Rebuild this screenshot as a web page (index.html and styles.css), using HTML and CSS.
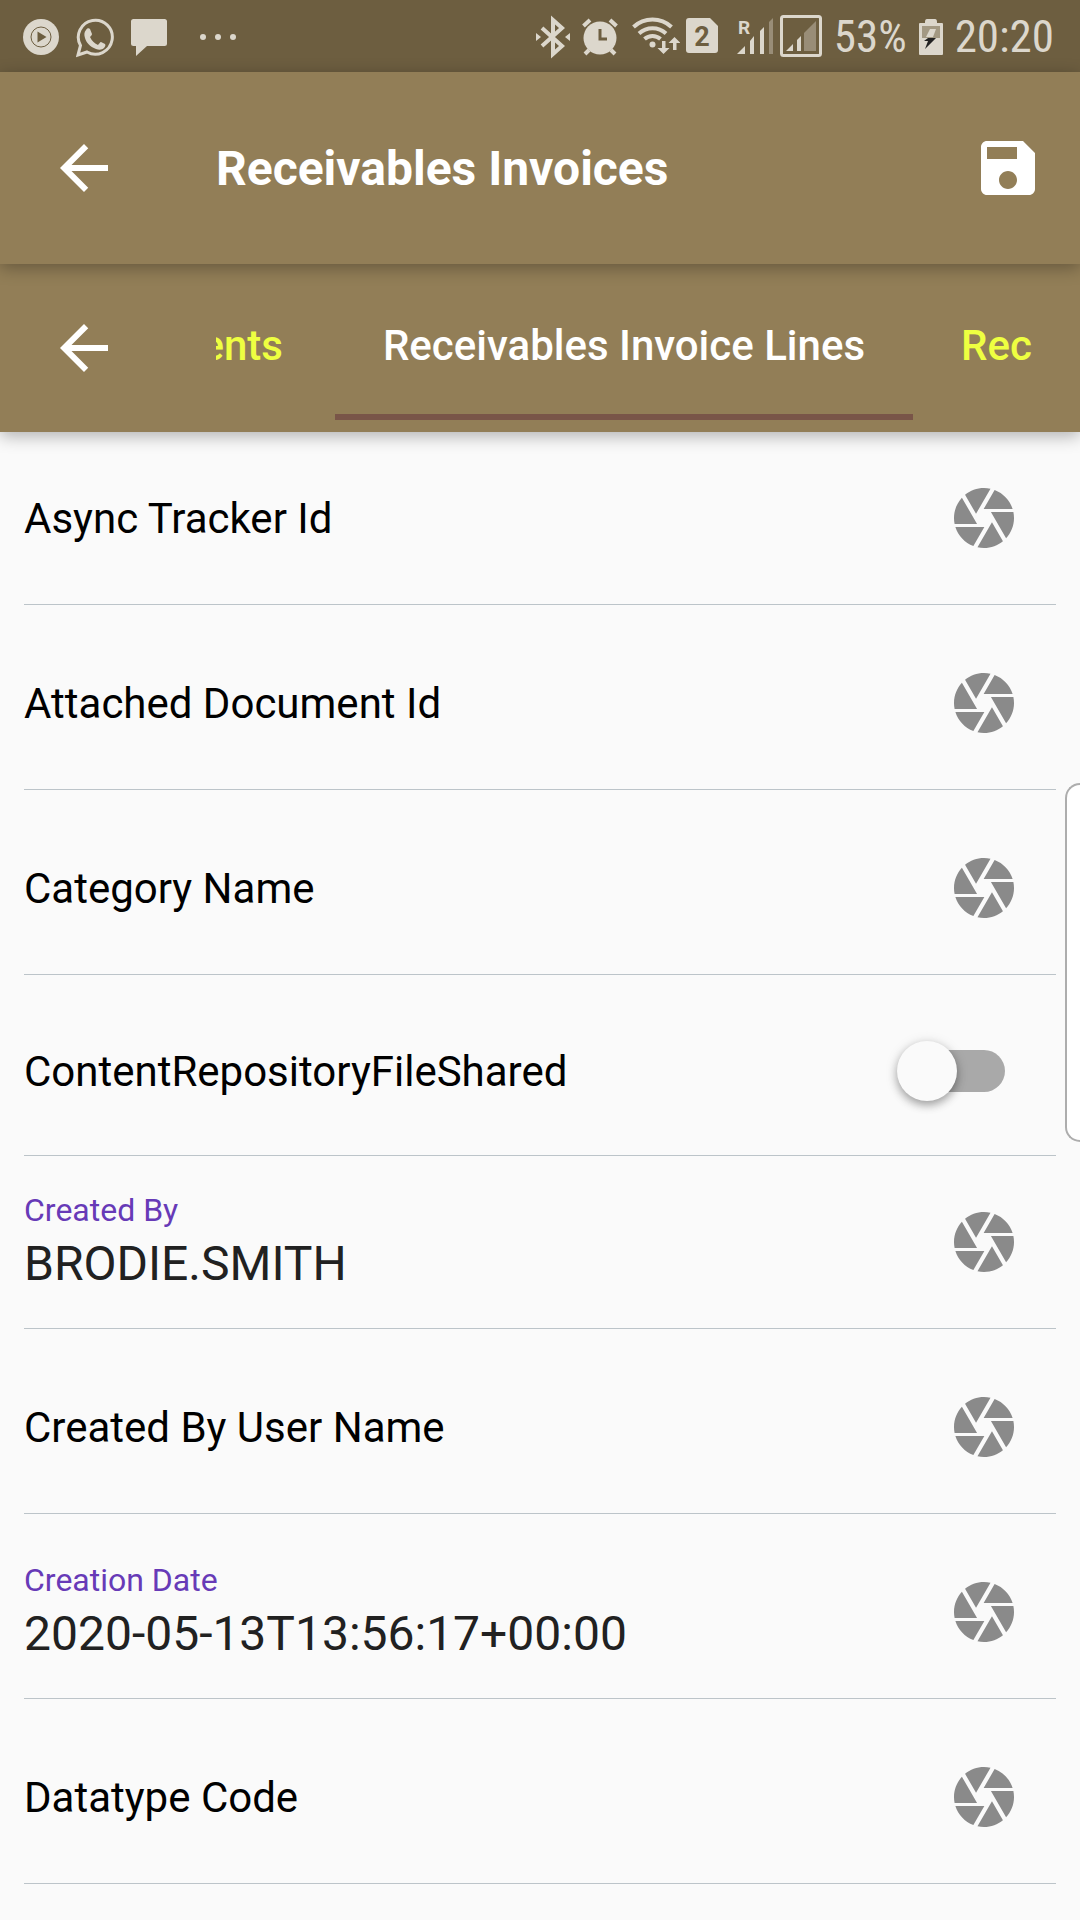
FILE: index.html
```
<!DOCTYPE html>
<html lang="en">
<head>
<meta charset="utf-8">
<meta name="viewport" content="width=device-width, initial-scale=1">
<title>Receivables Invoices</title>
<link rel="stylesheet" href="styles.css">
</head>
<body>
<svg class="defs" width="0" height="0" aria-hidden="true">
  <symbol id="back" viewBox="0 0 24 24"><path d="M20 11H7.83l5.59-5.59L12 4l-8 8 8 8 1.41-1.41L7.83 13H20v-2z"/></symbol>
  <symbol id="save" viewBox="0 0 24 24"><path d="M17 3H5c-1.11 0-2 .9-2 2v14c0 1.1.89 2 2 2h14c1.1 0 2-.9 2-2V7l-4-4zm-5 16c-1.66 0-3-1.34-3-3s1.34-3 3-3 3 1.34 3 3-1.34 3-3 3zm3-10H5V5h10v4z"/></symbol>
  <symbol id="camera" viewBox="0 0 24 24"><path d="M9.4 10.5l4.77-8.26C13.47 2.09 12.75 2 12 2c-2.4 0-4.6.85-6.32 2.25l3.66 6.35.06-.1zM21.54 9c-.92-2.92-3.15-5.26-6-6.34L11.88 9h9.66zm.26 1h-7.49l.29.5 4.76 8.25C21 16.97 22 14.61 22 12c0-.69-.07-1.35-.2-2zM8.54 12l-3.9-6.75C3.01 7.03 2 9.39 2 12c0 .69.07 1.35.2 2h7.49l-1.15-2zm-6.08 3c.92 2.92 3.15 5.26 6 6.34L12.12 15H2.46zm11.27 0l-3.9 6.76c.7.15 1.42.24 2.17.24 2.4 0 4.6-.85 6.32-2.25l-3.66-6.35-.93 1.6z"/></symbol>
</svg>

<div class="status">
  <div class="status-icons status-left">
    <svg width="36" height="48" viewBox="23 12 36 48"><circle cx="41" cy="37" r="18"/><circle class="cut-line" cx="41" cy="37" r="10"/><path class="cut" d="M37.500 31.500v11l9-5.500z"/></svg>
    <svg width="38" height="48" viewBox="76 12 38 48"><path class="line3" d="M78 55l2.500-9.500A17 17 0 1 1 87 52z"/><path d="M86 30c1-2 3-2 4-1l2 5c0 1-1 2-2 3 2 4 4 6 8 8 1-1 2-3 3-3l4 2c1 1 0 3-1 4-2 2-5 2-8 1-6-2-10-7-11-11-1-3-1-6 1-8z"/></svg>
    <svg width="36" height="48" viewBox="131 12 36 48"><path d="M133.500 19h31a2.500 2.500 0 0 1 2.500 2.500v22a2.500 2.500 0 0 1-2.500 2.500H147l-11 10V46h-2.500a2.500 2.500 0 0 1-2.500-2.500v-22a2.500 2.500 0 0 1 2.500-2.500z"/></svg>
    <svg class="more" width="36" height="48" viewBox="200 12 36 48"><circle cx="203" cy="37" r="3"/><circle cx="218" cy="37" r="3"/><circle cx="233" cy="37" r="3"/></svg>
  </div>
  <div class="status-icons status-right">
    <svg width="34" height="48" viewBox="539 12 34 48"><path class="line4" d="M545 28l20 18-9 8V20l9 8-20 18"/><path d="M539 33v8l5-4zM573 33v8l-5-4z"/></svg>
    <svg width="36" height="48" viewBox="584 12 36 48"><circle cx="602" cy="38" r="16.500"/><path class="line4" d="M585.500 26l6.500-6M618.500 26l-6.500-6M591 50l-4 4M613 50l4 4"/><path class="cut-line3" d="M602 29v10h7"/></svg>
    <svg class="wifi" width="48" height="48" viewBox="634 12 48 48"><path class="line4" d="M635.500 27a28 28 0 0 1 38 0M641 33.500a20 20 0 0 1 27 0M646.500 39a12 12 0 0 1 16 0"/><circle cx="654.500" cy="44.500" r="3"/><path d="M664 41h3.500v7h4l-6 6-6-6h4.500zM675 50h3.500v-7h4l-6-6-6 6H675z"/></svg>
    <svg class="sim" width="32" height="48" viewBox="688 12 32 48"><path d="M691 18h21l8 8v24a3 3 0 0 1-3 3h-26a3 3 0 0 1-3-3V21a3 3 0 0 1 3-3z"/><text x="704" y="46">2</text></svg>
    <svg class="signal" width="36" height="48" viewBox="739 12 36 48"><path d="M739 54l8-8v8zM752 54V41l4-5v18zM762 54V31l4-4v27z"/><path class="dim" d="M771 54V22l4-4v36z"/><text x="740" y="34">R</text></svg>
    <svg class="boxed" width="42" height="48" viewBox="782 12 42 48"><rect class="line3" x="783.500" y="16.500" width="39" height="39" rx="2"/><path d="M788 51l7-7v7zM799 51V40l4-4v15z"/><path class="dim" d="M806 51V33l12-12v30z"/></svg>
    <span class="percent">53%</span>
    <svg class="battery" width="24" height="48" viewBox="919 12 24 48"><path d="M927 19h8q2 0 2 3v1h5q1 0 1 1v30q0 1-1 1h-22q-1 0-1-1V24q0-1 1-1h5v-1q0-3 2-3z"/><path class="drain" d="M922 26h18v12h-18z"/><path d="M930 29h6l-3 8h-7z"/><path class="bolt" d="M928 38h8l-11 11 3-8h-4z"/></svg>
    <span class="clock">20:20</span>
  </div>
</div>

<header class="app-bar">
  <button class="icon-button" type="button" aria-label="Back"><svg width="72" height="72"><use href="#back"/></svg></button>
  <h1 class="title">Receivables Invoices</h1>
  <button class="icon-button" type="button" aria-label="Save"><svg width="72" height="72"><use href="#save"/></svg></button>
</header>

<nav class="tab-bar">
  <button class="icon-button" type="button" aria-label="Previous section"><svg width="72" height="72"><use href="#back"/></svg></button>
  <div class="tabs" role="tablist">
    <div class="side side-left"><button class="tab" type="button" role="tab">ents</button></div>
    <button class="tab active" type="button" role="tab" aria-selected="true">Receivables Invoice Lines</button>
    <div class="side"><button class="tab" type="button" role="tab">Rec</button></div>
  </div>
</nav>

<main class="form">
  <div class="row">
    <div class="field"><label for="tracker">Async Tracker Id</label><input id="tracker" type="text"></div>
    <button class="icon-button" type="button" aria-label="Capture Async Tracker Id"><svg width="72" height="72"><use href="#camera"/></svg></button>
  </div>
  <div class="row spaced">
    <div class="field"><label for="document">Attached Document Id</label><input id="document" type="text"></div>
    <button class="icon-button" type="button" aria-label="Capture Attached Document Id"><svg width="72" height="72"><use href="#camera"/></svg></button>
  </div>
  <div class="row spaced">
    <div class="field"><label for="category">Category Name</label><input id="category" type="text"></div>
    <button class="icon-button" type="button" aria-label="Capture Category Name"><svg width="72" height="72"><use href="#camera"/></svg></button>
  </div>
  <div class="row switch-row">
    <label for="shared">ContentRepositoryFileShared</label>
    <input class="switch" id="shared" type="checkbox" role="switch">
  </div>
  <div class="row">
    <div class="field filled"><label for="creator">Created By</label><input id="creator" type="text" value="BRODIE.SMITH"></div>
    <button class="icon-button" type="button" aria-label="Capture Created By"><svg width="72" height="72"><use href="#camera"/></svg></button>
  </div>
  <div class="row spaced">
    <div class="field"><label for="username">Created By User Name</label><input id="username" type="text"></div>
    <button class="icon-button" type="button" aria-label="Capture Created By User Name"><svg width="72" height="72"><use href="#camera"/></svg></button>
  </div>
  <div class="row spaced">
    <div class="field filled"><label for="created">Creation Date</label><input id="created" type="text" value="2020-05-13T13:56:17+00:00"></div>
    <button class="icon-button" type="button" aria-label="Capture Creation Date"><svg width="72" height="72"><use href="#camera"/></svg></button>
  </div>
  <div class="row spaced">
    <div class="field"><label for="datatype">Datatype Code</label><input id="datatype" type="text"></div>
    <button class="icon-button" type="button" aria-label="Capture Datatype Code"><svg width="72" height="72"><use href="#camera"/></svg></button>
  </div>
</main>
<div class="edge-handle"></div>
</body>
</html>
```
FILE: styles.css
```
* { box-sizing: border-box; }

:root {
  --bar: #927e57;
  --status: #6d5e40;
  --status-ink: #dcd7cc;
}

body {
  margin: 0;
  min-height: 100vh;
  background: #fafafa;
  color: #000;
  font-family: Roboto, sans-serif;
  font-size: 42px;
}

svg { display: block; fill: currentColor; flex: none; }
.defs { position: absolute; }

button {
  border: 0;
  padding: 0;
  background: none;
  color: inherit;
  font: inherit;
}
.icon-button { flex: none; }

/* Status bar */
.status {
  display: flex;
  justify-content: space-between;
  height: 72px;
  padding: 0 26px 0 23px;
  background: var(--status);
  color: var(--status-ink);
}
.status-icons { display: flex; align-items: center; }
.status-left { gap: 17px; }
.status-right { gap: 12px; }
.more { margin-left: 16px; }
.wifi { margin-left: 2px; }
.sim { margin-left: -6px; }
.signal { margin-left: 7px; }
.boxed { margin-left: -5px; }
.percent, .clock {
  padding-top: 2px;
  font-family: "Roboto Condensed", "Liberation Sans Narrow", Roboto, sans-serif;
  font-size: 45px;
  line-height: 70px;
}
.cut { fill: var(--status); }
.cut-line { fill: none; stroke: var(--status); stroke-width: 1; }
.cut-line3 { fill: none; stroke: var(--status); stroke-width: 3; }
.line3 { fill: none; stroke: currentColor; stroke-width: 3; }
.line4 { fill: none; stroke: currentColor; stroke-width: 4; }
.dim { fill: #998d77; }
.drain { fill: #a39983; }
.bolt { fill: #222; }
.sim text { fill: var(--status); font-size: 27px; font-weight: 700; text-anchor: middle; }
.signal text { font-size: 19px; font-weight: 700; }

/* Bars */
.app-bar, .tab-bar {
  position: relative;
  display: flex;
  align-items: center;
  background: var(--bar);
  color: #fff;
  box-shadow: 0 4px 16px rgba(0, 0, 0, 0.3);
}
.app-bar { z-index: 2; height: 192px; padding: 0 36px 0 48px; }
.tab-bar { z-index: 1; height: 168px; padding: 0 48px; }
.title {
  flex: 1;
  margin: 0;
  padding-left: 96px;
  font-size: 48px;
  font-weight: 700;
}
.tabs {
  flex: 1;
  display: grid;
  grid-template-columns: minmax(0, 1fr) auto minmax(0, 1fr);
  margin-left: 96px;
}
.side { display: flex; overflow: hidden; }
.side-left { justify-content: flex-end; padding-right: 4px; }
.tab {
  flex: none;
  height: 144px;
  padding: 0 48px;
  border-bottom: 6px solid transparent;
  color: #eeff41;
  font-weight: 500;
  white-space: nowrap;
}
.tab.active { color: #fff; border-color: #795548; }

/* Form */
.form { padding: 0 24px; }
.row {
  display: flex;
  align-items: center;
  height: 173px;
  padding-right: 36px;
  border-bottom: 1px solid #bcc4c9;
}
.row .icon-button { color: #8a8a8a; }
.spaced { height: 185px; padding-top: 12px; }
.field { flex: 1; display: grid; align-items: center; }
.field label, .field input { grid-area: 1 / 1; }
.field input {
  width: 100%;
  height: 56px;
  padding: 0;
  border: 0;
  outline: 0;
  background: transparent;
  color: #212121;
  font: 48px/56px Roboto, sans-serif;
}
.filled { padding-bottom: 8px; }
.filled label, .filled input { grid-area: auto; }
.filled label { color: #673ab7; font-size: 32px; line-height: 52px; }

.switch-row {
  justify-content: space-between;
  height: 181px;
  padding: 12px 51px 0 0;
}
.switch {
  appearance: none;
  display: flex;
  align-items: center;
  width: 99px;
  height: 42px;
  margin: 0;
  border-radius: 21px;
  background: #a9a9a9;
}
.switch::before {
  content: "";
  flex: none;
  width: 60px;
  height: 60px;
  margin-left: -9px;
  border-radius: 50%;
  background: #fafafa;
  box-shadow: 0 4px 8px rgba(0, 0, 0, 0.3), 0 2px 14px rgba(0, 0, 0, 0.12);
}

/* Panel handle that floats over the right edge of the screen */
.edge-handle {
  position: fixed;
  top: 783px;
  right: 0;
  width: 15px;
  height: 359px;
  border: 2px solid #adadad;
  border-right: 0;
  border-radius: 18px 0 0 18px;
  background: #fff;
}
```
